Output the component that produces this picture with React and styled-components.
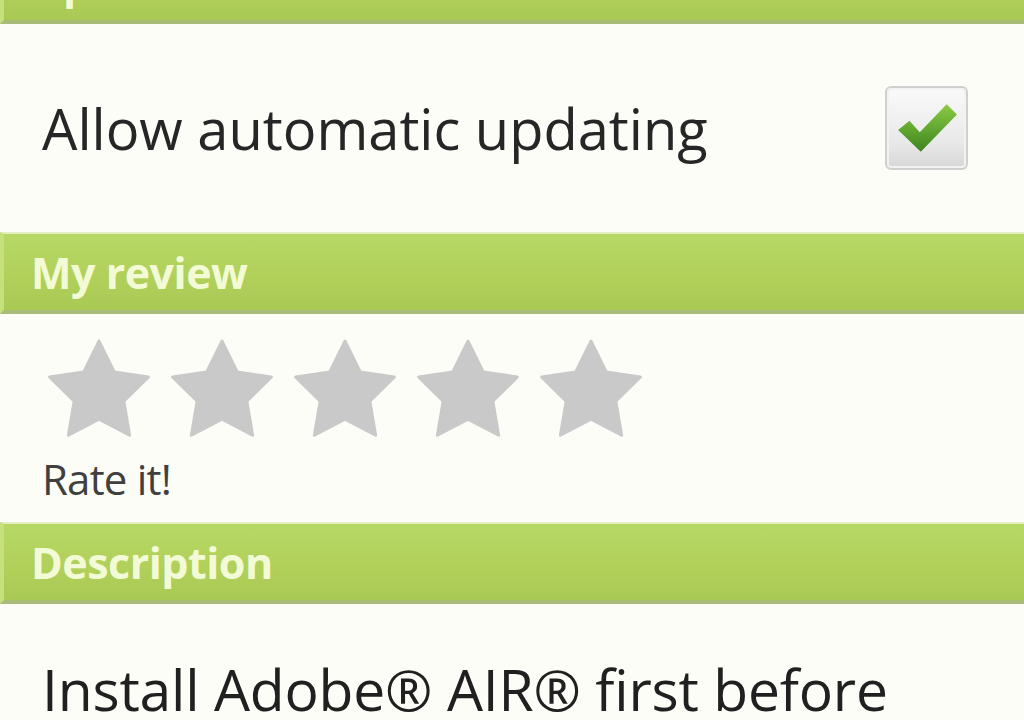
import React from "react";
import styled, { createGlobalStyle } from "styled-components";

const GlobalStyle = createGlobalStyle`
  html, body {
    margin: 0;
    padding: 0;
    background: #fdfdf7;
    font-family: "Open Sans", "DejaVu Sans", sans-serif;
    overflow: hidden;
  }
`;

const Screen = styled.div`
  width: 1024px;
  height: 720px;
  overflow: hidden;
  background: #fdfdf7;
  display: flex;
  flex-direction: column;
`;

const SectionHeader = styled.div`
  flex: none;
  height: 76px;
  margin-top: ${(p) => (p.$cut ? "-58px" : "0")};
  box-sizing: content-box;
  border-top: 2px solid #e4eec0;
  border-bottom: 4px solid #a8bb78;
  border-left: 4px solid #c6e07e;
  background: linear-gradient(#b8d866, #b0d05a 60%, #a9c955);
  display: flex;
  align-items: center;
  padding-left: 27px;
  color: #f2fbd6;
  font-size: 43px;
  font-weight: 700;
  letter-spacing: -0.5px;
`;

const SettingRow = styled.div`
  flex: none;
  height: 208px;
  display: flex;
  align-items: center;
  justify-content: space-between;
  padding: 0 56px 0 42px;
`;

const SettingLabel = styled.span`
  font-size: 56px;
  color: #262626;
`;

const CheckBox = styled.div`
  width: 83px;
  height: 84px;
  box-sizing: border-box;
  border: 2px solid #d0d0d0;
  border-radius: 6px;
  background: linear-gradient(#fafafa, #e8e8e8 70%, #d6d6d6);
  box-shadow: inset 0 0 0 2px #f2f2f2;
  display: flex;
  align-items: center;
  justify-content: center;
`;

const ReviewBlock = styled.div`
  flex: none;
  height: 208px;
  box-sizing: border-box;
  padding: 24px 0 0 47px;
  display: flex;
  flex-direction: column;
`;

const Stars = styled.div`
  display: flex;
  gap: 19px;
`;

const RateText = styled.div`
  margin-top: 8px;
  margin-left: -5px;
  font-size: 42px;
  color: #404040;
  letter-spacing: -0.8px;
`;

const Description = styled.div`
  padding: 46px 0 0 42px;
  font-size: 57px;
  color: #202020;
  white-space: nowrap;
  letter-spacing: -0.2px;
`;

const Star = () => (
  <svg width="104" height="104" viewBox="0 0 100 100">
    <polygon
      points="50,3 64.7,32.8 97.5,37.5 73.8,60.7 79.4,93.5 50,78 20.6,93.5 26.2,60.7 2.5,37.5 35.3,32.8"
      fill="#c9c9c9"
      stroke="#c9c9c9"
      strokeWidth="3"
      strokeLinejoin="round"
    />
  </svg>
);

const Check = () => (
  <svg width="64" height="58" viewBox="0 0 62 56">
    <defs>
      <linearGradient id="chk" x1="0" y1="0" x2="0" y2="1">
        <stop offset="0" stopColor="#8ccb44" />
        <stop offset="0.5" stopColor="#63a832" />
        <stop offset="1" stopColor="#3e8420" />
      </linearGradient>
    </defs>
    <path d="M3 30 L14 21 L24 32 L50 5 L60 15 L25 51 Z" fill="url(#chk)" />
  </svg>
);

export default function App() {
  return (
    <Screen>
      <GlobalStyle />
      <SectionHeader $cut>Updates</SectionHeader>
      <SettingRow>
        <SettingLabel>Allow automatic updating</SettingLabel>
        <CheckBox>
          <Check />
        </CheckBox>
      </SettingRow>
      <SectionHeader>My review</SectionHeader>
      <ReviewBlock>
        <Stars>
          {[0, 1, 2, 3, 4].map((i) => (
            <Star key={i} />
          ))}
        </Stars>
        <RateText>Rate it!</RateText>
      </ReviewBlock>
      <SectionHeader>Description</SectionHeader>
      <Description>Install Adobe® AIR® first before</Description>
    </Screen>
  );
}
